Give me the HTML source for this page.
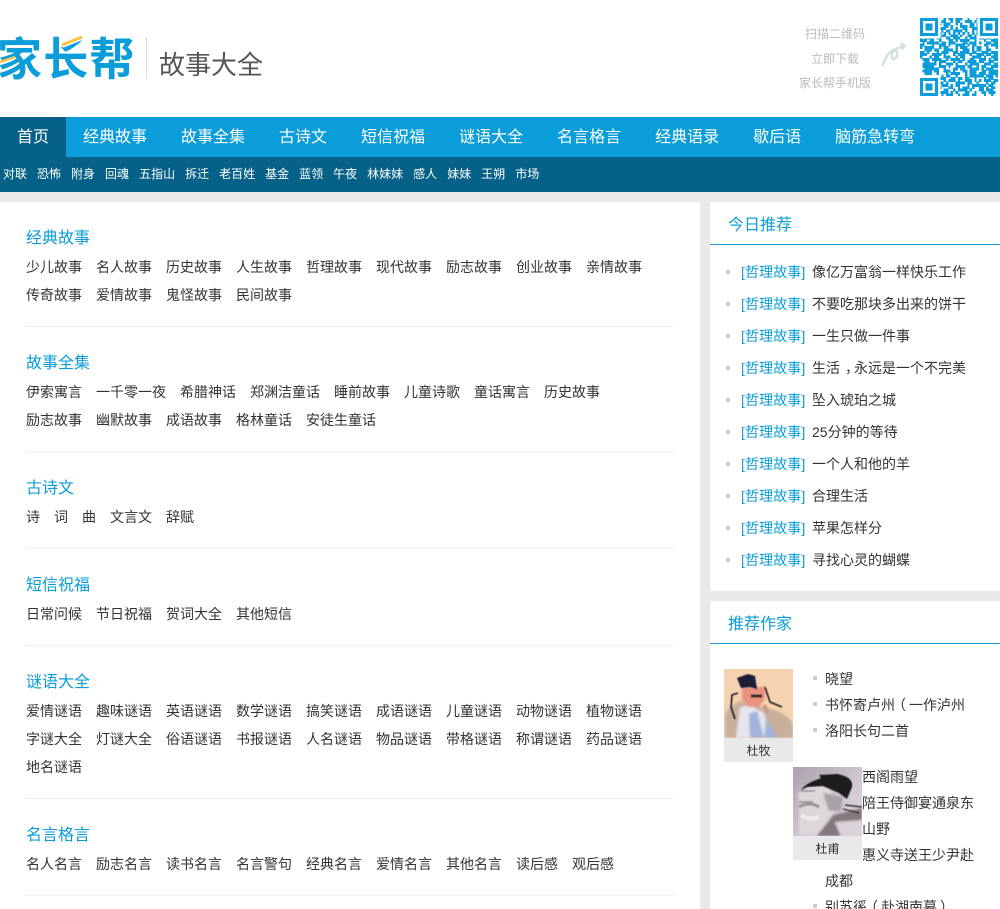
<!DOCTYPE html>
<html lang="zh"><head><meta charset="utf-8"><title>故事大全</title>
<style>
html,body{margin:0;padding:0}
body{width:1000px;height:909px;overflow:hidden;position:relative;background:#e9e9e9;font-family:"Liberation Sans","WenQuanYi Zen Hei","Noto Sans CJK SC",sans-serif;font-size:14px;color:#333}
div,span,a{box-sizing:border-box}
.a{position:absolute;white-space:nowrap}
#hd{position:absolute;left:0;top:0;width:1000px;height:117px;background:#fff;overflow:hidden}
#nav{position:absolute;left:0;top:117px;width:1000px;height:40px;background:#0a9dd9;color:#fff;font-size:16px;line-height:42px;white-space:nowrap}
#nav span{float:left;padding:0 17px;height:40px}
#nav span.on{background:#056187;width:66px}
#sub{position:absolute;left:0;top:157px;width:1000px;height:35px;background:#056187;color:#fff;font-size:12px;line-height:35px;white-space:nowrap;padding-left:3px}
#sub span{float:left;margin-right:10px}
#main{position:absolute;left:0;top:202px;width:700px;height:707px;background:#fff}
.t{position:absolute;left:26px;font-size:16px;line-height:20px;color:#0a9dd9;white-space:nowrap}
.r{position:absolute;left:26px;line-height:20px;white-space:nowrap;color:#333}
.r span{display:inline-block;margin-right:14px}
.d{position:absolute;left:26px;width:648px;height:1px;border-top:1px dotted #e2e2e2}
.p{position:absolute;left:710px;width:290px;background:#fff}
.h{position:absolute;left:18px;font-size:16px;line-height:20px;color:#0a9dd9}
.u{position:absolute;left:0;width:290px;height:1px;background:#1b9ad0}
.b{position:absolute;width:4px;height:4px;background:#ccc}
.l{position:absolute;line-height:20px;white-space:nowrap;color:#333}
.l i{font-style:normal;color:#0a9dd9;position:absolute;left:-71px;letter-spacing:.1px}
.l b{font-weight:400;position:relative}
.c{position:absolute;width:69px;height:24px;background:#e9e9e9;font-size:12px;line-height:26px;text-align:center;color:#333}
</style></head><body>
<div id="hd">
<div class="a" style="left:-3px;top:27px;font:700 45px/58px 'Noto Sans CJK SC',sans-serif;color:#0a9dd9;letter-spacing:1.2px">家长帮</div>
<svg class="a" style="left:0;top:30px" width="140" height="55"><path d="M62 15L82 7" stroke="#fff" stroke-width="6"/><path d="M62 15L82 7" stroke="#fbc33f" stroke-width="3"/><path d="M0 32L15 27" stroke="#fbc33f" stroke-width="2.5"/></svg>
<div class="a" style="left:146px;top:37px;width:1px;height:42px;background:#ddd"></div>
<div class="a" style="left:159px;top:47px;font-size:26px;line-height:36px;color:#555">故事大全</div>
<div class="a" style="left:805px;top:24px;font-size:12px;line-height:20px;color:#bbb">扫描二维码</div>
<div class="a" style="left:811px;top:49px;font-size:12px;line-height:20px;color:#bbb">立即下载</div>
<div class="a" style="left:799px;top:73px;font-size:12px;line-height:20px;color:#bbb">家长帮手机版</div>
<svg class="a" style="left:880px;top:40px" width="30" height="30" fill="none" stroke="#d5e0e5" stroke-width="2.4"><path d="M2 26C6 17 9 11 14 10C19 10 18 18 14 19C10 19 11 10 18 8L24 6"/><path d="M20 2L27 5L22 11" fill="#d5e0e5" stroke="none"/></svg>
<svg class="a" style="left:920px;top:18px" width="78" height="78" viewBox="0 0 33 33" fill="none" stroke="#0a9dd9" shape-rendering="crispEdges">
<g stroke-width="1.25">
<path d="M0 .5h33" stroke-dasharray="2 8 1 1 2 1 3 2 1 3 2 2 1 20"/>
<path d="M0 1.5h33" stroke-dasharray="0 9 2 2 1 1 2 2 3 1 1 2 1 20"/>
<path d="M0 2.5h33" stroke-dasharray="0 8 1 1 3 2 1 1 1 3 2 1 2 20"/>
<path d="M0 3.5h33" stroke-dasharray="0 10 2 1 1 3 3 1 2 1 1 20"/>
<path d="M0 4.5h33" stroke-dasharray="0 8 3 2 1 1 1 2 2 2 3 20"/>
<path d="M0 5.5h33" stroke-dasharray="0 9 1 1 2 1 4 1 1 2 1 1 2 20"/>
<path d="M0 6.5h33" stroke-dasharray="0 8 1 1 1 1 1 1 1 1 1 1 1 1 1 1 1 1 1 20"/>
<path d="M0 7.5h33" stroke-dasharray="0 9 2 2 3 1 1 2 2 1 1 20"/>
<path d="M0 8.5h33" stroke-dasharray="1 1 4 1 2 2 2 1 3 2 1 1 3 1 2 1 2 1 2"/>
<path d="M0 9.5h33" stroke-dasharray="3 1 2 2 1 3 2 1 1 1 4 2 1 3 1 2 3"/>
<path d="M0 10.5h33" stroke-dasharray="0 1 1 1 5 1 2 1 3 3 2 1 3 1 1 2 2 1 2"/>
<path d="M0 11.5h33" stroke-dasharray="2 3 1 2 3 1 1 2 4 1 1 1 2 3 2 1 3"/>
<path d="M0 12.5h33" stroke-dasharray="1 1 4 2 1 1 2 3 1 1 3 2 1 1 2 2 1 3 1"/>
<path d="M0 13.5h33" stroke-dasharray="0 2 3 1 2 2 4 1 1 2 3 1 1 1 2 2 2 3"/>
<path d="M0 14.5h33" stroke-dasharray="2 1 1 3 1 1 3 2 2 1 4 1 2 2 3 1 3"/>
<path d="M0 15.5h33" stroke-dasharray="3 2 4 1 1 3 1 1 3 2 1 2 3 1 2 1 2"/>
<path d="M0 16.5h33" stroke-dasharray="1 3 1 1 2 2 3 2 1 1 2 3 4 1 1 2 3"/>
<path d="M0 17.5h33" stroke-dasharray="0 1 3 1 4 2 1 1 4 1 1 2 2 2 3 1 1 1 2"/>
<path d="M0 18.5h33" stroke-dasharray="0 2 2 2 1 1 3 3 1 1 2 2 4 1 2 2 2 2"/>
<path d="M0 19.5h33" stroke-dasharray="0 1 6 1 1 2 3 1 1 3 1 1 4 2 3 1 2"/>
<path d="M0 20.5h33" stroke-dasharray="0 1 5 2 3 1 1 2 4 1 2 2 1 1 2 2 3"/>
<path d="M0 21.5h33" stroke-dasharray="0 2 6 2 1 3 2 1 2 2 4 1 1 1 3 2"/>
<path d="M0 22.5h33" stroke-dasharray="0 1 4 1 2 2 3 1 1 3 2 1 3 2 2 1 4"/>
<path d="M0 23.5h33" stroke-dasharray="0 2 3 2 1 3 1 1 4 2 1 1 3 1 3 1 4"/>
<path d="M0 24.5h33" stroke-dasharray="0 9 1 1 2 2 1 3 1 1 6 1 3 1 1"/>
<path d="M0 25.5h33" stroke-dasharray="0 8 3 2 2 1 2 1 2 2 1 3 1 1 2 1"/>
<path d="M0 26.5h33" stroke-dasharray="0 10 1 1 3 1 1 2 3 1 1 1 1 1 3 1 2"/>
<path d="M0 27.5h33" stroke-dasharray="0 8 2 1 1 3 4 1 2 2 1 3 1 1 2 1"/>
<path d="M0 28.5h33" stroke-dasharray="0 9 3 1 1 1 2 3 1 1 6 1 2 2"/>
<path d="M0 29.5h33" stroke-dasharray="0 8 1 3 2 2 1 1 3 1 1 2 2 1 1 1 2 1"/>
<path d="M0 30.5h33" stroke-dasharray="0 10 2 2 1 1 4 1 1 3 2 1 3 2"/>
<path d="M0 31.5h33" stroke-dasharray="0 8 4 1 1 1 1 3 2 2 1 2 2 1 3 1"/>
<path d="M0 32.5h33" stroke-dasharray="0 9 1 1 3 2 1 1 3 1 2 3 1 2 1 2"/>
</g>
<g stroke="none" fill="#fff"><rect width="8.6" height="8.6"/><rect x="24.4" width="8.6" height="8.6"/><rect y="24.4" width="8.6" height="8.6"/></g>
<g stroke-width="1.3"><rect x=".65" y=".65" width="6.3" height="6.3"/><rect x="26.05" y=".65" width="6.3" height="6.3"/><rect x=".65" y="26.05" width="6.3" height="6.3"/></g>
<g fill="#0a9dd9" stroke="none"><rect x="2.3" y="2.3" width="3" height="3"/><rect x="27.7" y="2.3" width="3" height="3"/><rect x="2.3" y="27.7" width="3" height="3"/></g>
</svg>
</div>
<div id="nav"><span class="on">首页</span><span>经典故事</span><span>故事全集</span><span>古诗文</span><span>短信祝福</span><span>谜语大全</span><span>名言格言</span><span>经典语录</span><span>歇后语</span><span>脑筋急转弯</span></div>
<div id="sub"><span>对联</span><span>恐怖</span><span>附身</span><span>回魂</span><span>五指山</span><span>拆迁</span><span>老百姓</span><span>基金</span><span>蓝领</span><span>午夜</span><span>林妹妹</span><span>感人</span><span>妹妹</span><span>王朔</span><span>市场</span></div>
<div id="main">
<div class="t" style="top:25px;margin-top:2px">经典故事</div>
<div class="r" style="top:55px"><span>少儿故事</span><span>名人故事</span><span>历史故事</span><span>人生故事</span><span>哲理故事</span><span>现代故事</span><span>励志故事</span><span>创业故事</span><span>亲情故事</span></div>
<div class="r" style="top:83px"><span>传奇故事</span><span>爱情故事</span><span>鬼怪故事</span><span>民间故事</span></div>
<div class="d" style="top:124px"></div>
<div class="t" style="top:150px;margin-top:2px">故事全集</div>
<div class="r" style="top:180px"><span>伊索寓言</span><span>一千零一夜</span><span>希腊神话</span><span>郑渊洁童话</span><span>睡前故事</span><span>儿童诗歌</span><span>童话寓言</span><span>历史故事</span></div>
<div class="r" style="top:208px"><span>励志故事</span><span>幽默故事</span><span>成语故事</span><span>格林童话</span><span>安徒生童话</span></div>
<div class="d" style="top:249px"></div>
<div class="t" style="top:277px">古诗文</div>
<div class="r" style="top:305px"><span>诗</span><span>词</span><span>曲</span><span>文言文</span><span>辞赋</span></div>
<div class="d" style="top:346px"></div>
<div class="t" style="top:374px">短信祝福</div>
<div class="r" style="top:402px"><span>日常问候</span><span>节日祝福</span><span>贺词大全</span><span>其他短信</span></div>
<div class="d" style="top:443px"></div>
<div class="t" style="top:471px">谜语大全</div>
<div class="r" style="top:499px"><span>爱情谜语</span><span>趣味谜语</span><span>英语谜语</span><span>数学谜语</span><span>搞笑谜语</span><span>成语谜语</span><span>儿童谜语</span><span>动物谜语</span><span>植物谜语</span></div>
<div class="r" style="top:527px"><span>字谜大全</span><span>灯谜大全</span><span>俗语谜语</span><span>书报谜语</span><span>人名谜语</span><span>物品谜语</span><span>带格谜语</span><span>称谓谜语</span><span>药品谜语</span></div>
<div class="r" style="top:555px"><span>地名谜语</span></div>
<div class="d" style="top:596px"></div>
<div class="t" style="top:624px">名言格言</div>
<div class="r" style="top:652px"><span>名人名言</span><span>励志名言</span><span>读书名言</span><span>名言警句</span><span>经典名言</span><span>爱情名言</span><span>其他名言</span><span>读后感</span><span>观后感</span></div>
<div class="d" style="top:693px"></div>
</div>
<div class="p" style="top:202px;height:389px">
<div class="h" style="top:14px">今日推荐</div><div class="u" style="top:42px"></div>
<div class="b" style="left:16px;top:68px"></div><div class="l" style="left:102px;top:60px"><i>[哲理故事]</i>像亿万富翁一样快乐工作</div>
<div class="b" style="left:16px;top:100px"></div><div class="l" style="left:102px;top:92px"><i>[哲理故事]</i>不要吃那块多出来的饼干</div>
<div class="b" style="left:16px;top:132px"></div><div class="l" style="left:102px;top:124px"><i>[哲理故事]</i>一生只做一件事</div>
<div class="b" style="left:16px;top:164px"></div><div class="l" style="left:102px;top:156px"><i>[哲理故事]</i>生活<b style="left:5px">，</b>永远是一个不完美</div>
<div class="b" style="left:16px;top:196px"></div><div class="l" style="left:102px;top:188px"><i>[哲理故事]</i>坠入琥珀之城</div>
<div class="b" style="left:16px;top:228px"></div><div class="l" style="left:102px;top:220px"><i>[哲理故事]</i>25分钟的等待</div>
<div class="b" style="left:16px;top:260px"></div><div class="l" style="left:102px;top:252px"><i>[哲理故事]</i>一个人和他的羊</div>
<div class="b" style="left:16px;top:292px"></div><div class="l" style="left:102px;top:284px"><i>[哲理故事]</i>合理生活</div>
<div class="b" style="left:16px;top:324px"></div><div class="l" style="left:102px;top:316px"><i>[哲理故事]</i>苹果怎样分</div>
<div class="b" style="left:16px;top:356px"></div><div class="l" style="left:102px;top:348px"><i>[哲理故事]</i>寻找心灵的蝴蝶</div>
</div>
<div class="p" style="top:601px;height:308px;overflow:hidden">
<div class="h" style="top:14px">推荐作家</div><div class="u" style="top:42px"></div>
<svg class="a" style="left:14px;top:68px" width="69" height="69" viewBox="0 0 69 69"><defs><filter id="f1" x="-10%" y="-10%" width="120%" height="120%"><feGaussianBlur stdDeviation="1"/></filter><filter id="f2"><feGaussianBlur stdDeviation=".5"/></filter></defs>
<rect width="69" height="69" fill="#f5d3b0"/><g filter="url(#f1)">
<path d="M1 69V46C4 38 10 34 18 32L30 36L46 40C56 42 66 48 69 56V69Z" fill="#c8b09c"/>
<path d="M12 69L16 38L26 36L40 44L48 69Z" fill="#e6e4ec"/>
<path d="M25 45L33 42L40 69H26Z" fill="#a3b2dc"/>
<path d="M42 50L54 69H40Z" fill="#a3b2dc"/>
<path d="M18 18H41V30L35 38H24L18 30Z" fill="#e8917f"/>
</g><g filter="url(#f2)">
<path d="M13 9L24 5L31 7L33 20L26 18L17 19Z" fill="#1c1c36"/>
<path d="M27 27H38" stroke="#222" stroke-width="2.5"/>
<path d="M14 24L8 26L7 38L11 50" fill="none" stroke="#1a1a22" stroke-width="1.6"/>
<path d="M41 18L46 33L58 38" fill="none" stroke="#1a1a22" stroke-width="1.6"/>
<path d="M40 36L44 44" stroke="#c98" stroke-width="4"/>
</g></svg>
<div class="c" style="left:14px;top:137px">杜牧</div>
<svg class="a" style="left:83px;top:166px" width="69" height="69" viewBox="0 0 69 69">
<defs><linearGradient id="g2" x1="0" y1="0" x2="1" y2="1"><stop offset="0" stop-color="#aba0ac"/><stop offset=".6" stop-color="#d4cad4"/><stop offset="1" stop-color="#e0d8e0"/></linearGradient></defs>
<rect width="69" height="69" fill="url(#g2)"/><g filter="url(#f1)">
<path d="M5 26L18 18L36 20L44 40L36 58L20 68H6V40Z" fill="#ddd6da"/>
<path d="M30 26L50 30L48 44L36 44Z" fill="#a8a2a8"/>
<path d="M24 69L40 48L69 41V53L42 55L48 69Z" fill="#85787f"/>
<path d="M48 69L42 56L69 53V69Z" fill="#dcd2da"/>
</g><g filter="url(#f2)">
<path d="M8 23C14 15 24 13 28 11L26 8L44 7C55 9 60 13 59 20L54 32L46 26L30 19L14 20Z" fill="#1c1a1e"/>
<path d="M52 38L69 40M50 42L66 46" stroke="#333" stroke-width="1.4"/>
<path d="M6 35H20M8 24H22" stroke="#8a8488" stroke-width="1.2"/>
<path d="M6 40C12 36 20 36 26 40" stroke="#9a9498" stroke-width="3" fill="none"/>
<path d="M8 48C12 52 20 52 26 50" stroke="#f0ecee" stroke-width="4" fill="none"/>
</g></svg>
<div class="c" style="left:83px;top:235px">杜甫</div>
<div class="b" style="left:103px;top:75px"></div><div class="l" style="left:115px;top:68px">晓望</div>
<div class="b" style="left:103px;top:101px"></div><div class="l" style="left:115px;top:94px">书怀寄卢州<b style="left:-3px">（</b>一作泸州</div>
<div class="b" style="left:103px;top:127px"></div><div class="l" style="left:115px;top:120px">洛阳长句二首</div>
<div class="l" style="left:152px;top:166px">西阁雨望</div>
<div class="l" style="left:152px;top:192px">陪王侍御宴通泉东</div>
<div class="l" style="left:152px;top:218px">山野</div>
<div class="l" style="left:152px;top:244px">惠义寺送王少尹赴</div>
<div class="l" style="left:115px;top:270px">成都</div>
<div class="b" style="left:103px;top:303px"></div><div class="l" style="left:115px;top:296px">别苏徯<b style="left:-3px">（</b>赴湖南幕<b style="left:3px">）</b></div>
</div>
</body></html>
